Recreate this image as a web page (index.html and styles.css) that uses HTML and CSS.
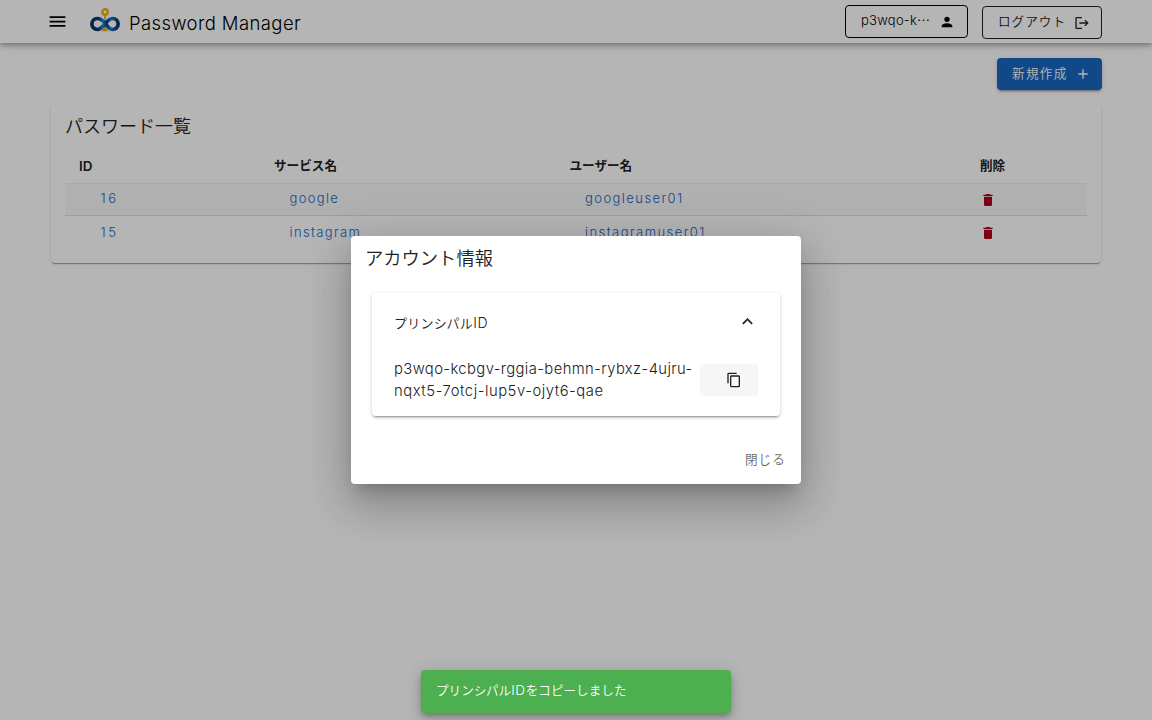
FILE: index.html
```html
<!DOCTYPE html>
<html lang="ja">
<head>
<meta charset="utf-8">
<title>Password Manager</title>
<link rel="stylesheet" href="styles.css">
</head>
<body>
<div class="app">
  <header class="bar">
    <svg class="menu" viewBox="0 0 24 24"><path d="M3 6h18v2H3V6m0 5h18v2H3v-2m0 5h18v2H3v-2Z"/></svg>
    <svg class="logo" viewBox="0 0 32 28">
      <defs>
        <linearGradient id="loop" x1="0" y1="0" x2="1" y2="0"><stop offset="0" stop-color="#093568"/><stop offset=".25" stop-color="#0b3a70"/><stop offset=".42" stop-color="#2088e6"/><stop offset=".55" stop-color="#0b3a70"/><stop offset=".72" stop-color="#1a78d0"/><stop offset="1" stop-color="#08335f"/></linearGradient>
      </defs>
      <circle cx="16" cy="6" r="2.700" fill="none" stroke="#eab018" stroke-width="2.500"/>
      <path d="M16 8.500v6M16 21.500l-1.800 2.800h3.600z" fill="#eab018" stroke="#eab018" stroke-width="1.700"/>
      <path d="M16 17.200C13.500 14.200 11.400 12.500 8.400 12.500a5.500 5.500 0 0 0 0 11c6.500 0 8.700-11 15.200-11a5.500 5.500 0 0 1 0 11c-3 0-5.100-3.300-7.600-6.300z" fill="none" stroke="url(#loop)" stroke-width="3.700"/>
    </svg>
    <h1 class="brand">Password Manager</h1>
    <button class="outlined account"><span>p3wqo-k<span class="dots">…</span></span><svg class="icon" viewBox="0 0 24 24"><path d="M12 4a4 4 0 1 1 0 8 4 4 0 0 1 0-8m0 10c4.420 0 8 1.790 8 4v2H4v-2c0-2.210 3.580-4 8-4Z"/></svg></button>
    <button class="outlined logout"><span>ログアウト</span><svg class="icon" viewBox="0 0 24 24"><path d="M17 7l-1.410 1.410L18.170 11H8v2h10.170l-2.580 2.580L17 17l5-5M4 5h8V3H4a2 2 0 0 0-2 2v14a2 2 0 0 0 2 2h8v-2H4V5Z"/></svg></button>
  </header>
  <main class="content">
    <button class="create"><span>新規作成</span><svg class="icon" viewBox="0 0 24 24"><path d="M19 13h-6v6h-2v-6H5v-2h6V5h2v6h6v2Z"/></svg></button>
    <section class="card">
      <h2 class="card-title">パスワード一覧</h2>
      <div class="row head"><span class="latin">ID</span><span>サービス名</span><span>ユーザー名</span><span>削除</span></div>
      <div class="row striped">
        <a class="id">16</a><a class="service">google</a><a>googleuser01</a>
        <svg class="trash" viewBox="0 0 24 24"><path d="M19 4h-3.500l-1-1h-5l-1 1H5v2h14M6 19a2 2 0 0 0 2 2h8a2 2 0 0 0 2-2V7H6v12Z"/></svg>
      </div>
      <div class="row">
        <a class="id">15</a><a class="service">instagram</a><a>instagramuser01</a>
        <svg class="trash" viewBox="0 0 24 24"><path d="M19 4h-3.500l-1-1h-5l-1 1H5v2h14M6 19a2 2 0 0 0 2 2h8a2 2 0 0 0 2-2V7H6v12Z"/></svg>
      </div>
    </section>
  </main>
</div>
<div class="scrim">
  <div class="dialog">
    <h2 class="dialog-title">アカウント情報</h2>
    <div class="panel">
      <div class="panel-head"><span>プリンシパル<span class="wide">ID</span></span><svg class="chevron" viewBox="0 0 24 24"><path d="M7.410 15.410 12 10.830l4.590 4.580L18 14l-6-6-6 6 1.410 1.410Z"/></svg></div>
      <div class="panel-body">
        <p class="principal"><span>p3wqo-kcbgv-rggia-behmn-rybxz-4ujru-</span><span class="tail">nqxt5-7otcj-lup5v-ojyt6-qae</span></p>
        <button class="copy"><svg viewBox="0 0 24 24"><path d="M19 21H8V7h11m0-2H8a2 2 0 0 0-2 2v14a2 2 0 0 0 2 2h11a2 2 0 0 0 2-2V7a2 2 0 0 0-2-2m-3-4H4a2 2 0 0 0-2 2v14h2V3h12V1Z"/></svg></button>
      </div>
    </div>
    <button class="close">閉じる</button>
  </div>
</div>
<div class="toast">プリンシパル<span class="wide">ID</span>をコピーしました</div>
</body>
</html>
```
FILE: styles.css
```css
* { box-sizing: border-box; }
body {
  margin: 0;
  width: 1152px;
  height: 720px;
  overflow: hidden;
  background: #fff;
  color: #212121;
  font: 350 13px/20px Inter, "Noto Sans CJK JP", sans-serif;
}
h1, h2, p { margin: 0; font-weight: 300; }
button { font: inherit; color: inherit; padding: 0; border: 0; background: none; display: flex; align-items: center; }
svg { display: block; fill: currentColor; flex: none; }
.app { height: 720px; }
.bar {
  height: 43px;
  display: flex;
  align-items: center;
  padding: 0 50px 0 47px;
  color: #000;
  box-shadow: 0 2px 4px -1px rgba(0,0,0,.2), 0 4px 5px rgba(0,0,0,.14), 0 1px 10px rgba(0,0,0,.12);
}
.menu { width: 21px; height: 21px; }
.logo { width: 32px; height: 28px; margin: -3px 0 0 21px; }
.brand { margin: 2px 0 0 8px; font-size: 18.5px; line-height: 28px; letter-spacing: .4px; white-space: nowrap; }
.outlined { height: 33px; border: 1px solid currentColor; border-radius: 4px; justify-content: space-between; }
.icon { width: 16px; height: 16px; }
.account { width: 123px; margin-left: auto; padding: 0 12px 0 15px; letter-spacing: .25px; }
.account > span { margin-top: -3px; white-space: nowrap; }
.dots { font-family: "Noto Sans CJK JP", sans-serif; }
.logout { width: 120px; margin: 2px 0 0 14px; padding: 0 11px 0 15px; font-size: 12.6px; letter-spacing: 1px; color: #212121; }
.logout > span { margin-top: -2px; }
.content { padding: 15px 51px 0; }
.create {
  width: 105px; height: 32px; margin: 0 -1px 15px auto; padding: 0 11px 0 15px;
  justify-content: space-between; border-radius: 4px;
  background: #1867c0; color: #fff; font-size: 12.6px; letter-spacing: 1.3px;
  box-shadow: 0 3px 1px -2px rgba(0,0,0,.2), 0 2px 2px rgba(0,0,0,.14), 0 1px 5px rgba(0,0,0,.12);
}
.card {
  height: 158px; padding: 7px 14px 0; border-radius: 4px;
  box-shadow: 0 2px 1px -1px rgba(0,0,0,.2), 0 1px 1px rgba(0,0,0,.14), 0 1px 3px rgba(0,0,0,.12);
}
.card-title { font-size: 18px; line-height: 29px; font-weight: 350; }
.row { display: grid; grid-template-columns: 195px 295.5px 410.5px 1fr; height: 35px; align-items: center; border-top: 1px solid #dfdfdf; }
.row > * { margin-left: 14px; }
.row.head { height: 42px; border: 0; font-weight: 600; font-size: 12.6px; padding-top: 7px; }
.row .latin { font-size: 13.4px; }
.row.striped { height: 32px; background: #f8f8f8; border-top-color: #eee; }
.row a { padding: 0 0 2px 15.5px; color: #1867c0; letter-spacing: 1.44px; font-size: 13px; }
.row.striped a { padding-bottom: 4px; }
.row .service { letter-spacing: 1.35px; }
.row .id { padding-left: 21.5px; letter-spacing: 2.6px; }
.trash { width: 16px; height: 16px; }
.row .trash { color: #b00020; margin-left: 14px; }
.scrim { position: absolute; inset: 0; background: rgba(0,0,0,.29); display: flex; align-items: center; justify-content: center; }
.dialog {
  width: 450px; height: 248px; padding: 8px 21px 0; background: #fff; border-radius: 4px;
  box-shadow: 0 11px 15px -7px rgba(0,0,0,.2), 0 24px 38px 3px rgba(0,0,0,.14), 0 9px 46px 8px rgba(0,0,0,.12);
}
.dialog-title { margin-left: -7px; font-size: 18.3px; line-height: 29px; font-weight: 350; }
.panel {
  height: 123px; margin-top: 20px; padding: 0 22px; border-radius: 4px;
  box-shadow: 0 3px 1px -2px rgba(0,0,0,.2), 0 2px 2px rgba(0,0,0,.14), 0 1px 5px rgba(0,0,0,.12);
}
.panel-head { height: 58px; display: flex; justify-content: space-between; align-items: center; }
.panel-head > span { margin-top: 2px; letter-spacing: .25px; }
.wide { font-size: 1.08em; letter-spacing: .6px; }
.chevron { width: 21px; height: 21px; margin-top: -2px; }
.panel-body { display: flex; align-items: center; justify-content: space-between; height: 58px; }
.principal { font-size: 14.8px; line-height: 22px; font-weight: 300; letter-spacing: .4px; white-space: nowrap; }
.principal span { display: block; }
.principal .tail { letter-spacing: .55px; }
.copy { width: 58px; height: 32px; background: #f6f6f6; border-radius: 4px; padding-left: 26px; }
.copy svg { width: 16px; height: 16px; }
.close { margin: 34px -6px 0 auto; font-size: 12.6px; letter-spacing: 1.1px; color: #6c6c6c; }
.toast {
  position: absolute; left: 421px; top: 670px; width: 310px; height: 43px; padding: 10px 15px;
  border-radius: 4px; background: #4caf50; color: #fff; font-size: 12.6px; white-space: nowrap;
  box-shadow: 0 3px 5px -1px rgba(0,0,0,.2), 0 6px 10px rgba(0,0,0,.14), 0 1px 18px rgba(0,0,0,.12);
}
```
